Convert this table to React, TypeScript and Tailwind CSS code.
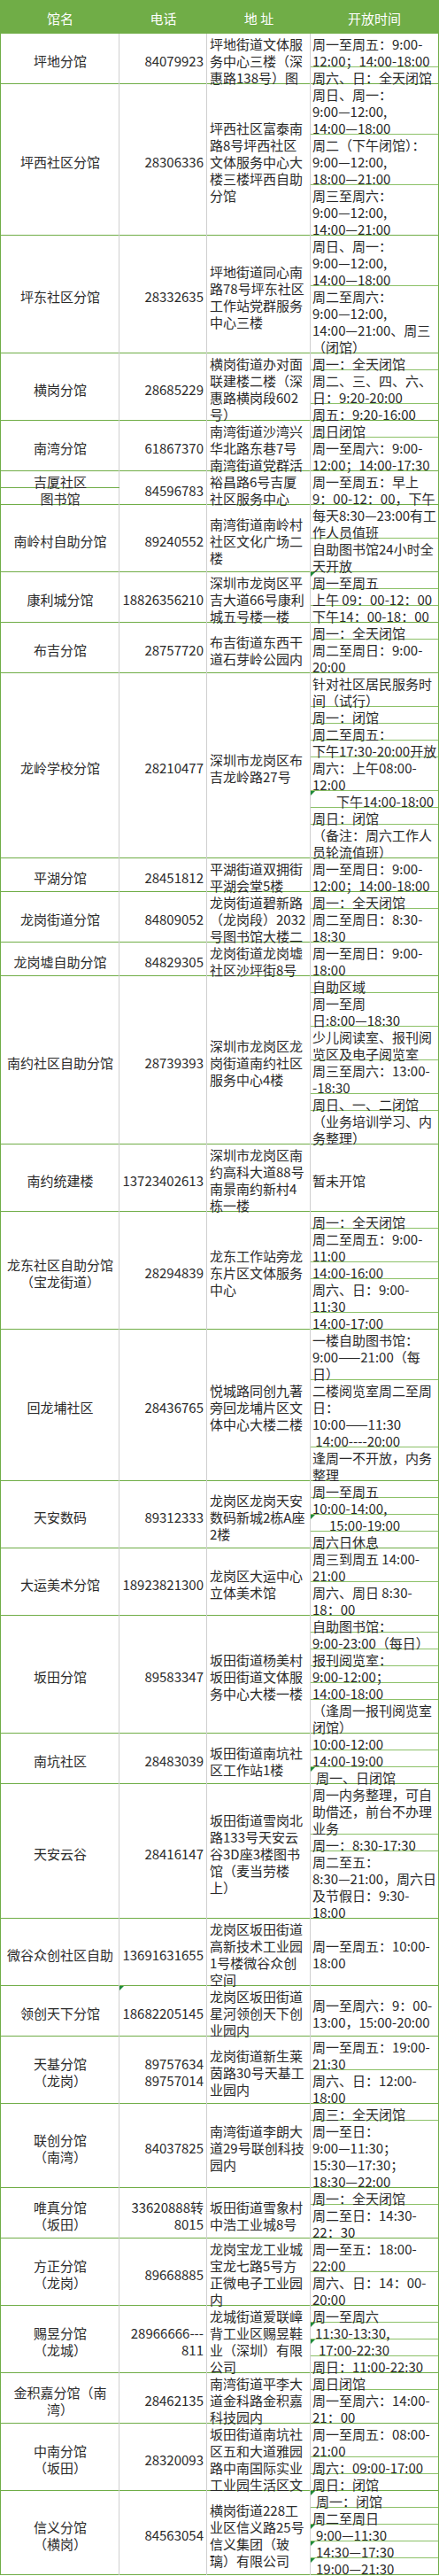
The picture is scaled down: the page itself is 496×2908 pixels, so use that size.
import clsx from "clsx";

type Sub = { span: number; lines: string[]; tri?: boolean; pad?: string };
type Lib = {
  name: string[];
  split?: boolean;
  phone: string[];
  phoneTri?: boolean;
  addr: string[];
  subs: Sub[];
};

// row heights: one excel row = 19px
const H: Record<number, string> = {
  1: "h-[19px]",
  2: "h-[38px]",
  3: "h-[57px]",
  4: "h-[76px]",
  5: "h-[95px]",
  6: "h-[114px]",
  7: "h-[133px]",
  8: "h-[152px]",
  9: "h-[171px]",
  10: "h-[190px]",
  11: "h-[209px]",
};

// grid lines drawn as inset shadows so they take no room from the text
const LINE_B = "shadow-[inset_0_-1px_0_#70ad47]";
const LINE_SUB = "shadow-[inset_0_-1px_0_#8cc168]";
const LINE_R = "shadow-[inset_-1px_0_0_#cfcfcf]";

const LIBS: Lib[] = [
  {
    name: ["坪地分馆"],
    phone: ["84079923"],
    addr: ["坪地街道文体服", "务中心三楼（深", "惠路138号）图"],
    subs: [
      { span: 2, lines: ["周一至周五：9:00-", "12:00；14:00-18:00"] },
      { span: 1, lines: ["周六、日：全天闭馆"] },
    ],
  },
  {
    name: ["坪西社区分馆"],
    phone: ["28306336"],
    addr: ["坪西社区富泰南", "路8号坪西社区", "文体服务中心大", "楼三楼坪西自助", "分馆"],
    subs: [
      { span: 3, lines: ["周日、周一：", "9:00—12:00,", "14:00—18:00"] },
      { span: 3, lines: ["周二（下午闭馆）：", "9:00—12:00,", "18:00—21:00"] },
      { span: 3, lines: ["周三至周六：", "9:00—12:00,", "14:00—21:00"] },
    ],
  },
  {
    name: ["坪东社区分馆"],
    phone: ["28332635"],
    addr: ["坪地街道同心南", "路78号坪东社区", "工作站党群服务", "中心三楼"],
    subs: [
      { span: 3, lines: ["周日、周一：", "9:00—12:00,", "14:00—18:00"] },
      { span: 4, lines: ["周二至周六：", "9:00—12:00,", "14:00—21:00、周三", "（闭馆）"] },
    ],
  },
  {
    name: ["横岗分馆"],
    phone: ["28685229"],
    addr: ["横岗街道办对面", "联建楼二楼（深", "惠路横岗段602", "号）"],
    subs: [
      { span: 1, lines: ["周一：全天闭馆"] },
      { span: 2, lines: ["周二、三、四、六、", "日：9:20-20:00"] },
      { span: 1, lines: ["周五：9:20-16:00"] },
    ],
  },
  {
    name: ["南湾分馆"],
    phone: ["61867370"],
    addr: ["南湾街道沙湾兴", "华北路东巷7号", "南湾街道党群活"],
    subs: [
      { span: 1, lines: ["周日闭馆"] },
      { span: 2, lines: ["周一至周六：9:00-", "12:00；14:00-17:30"] },
    ],
  },
  {
    name: ["吉厦社区", "图书馆"],
    split: true,
    phone: ["84596783"],
    addr: ["裕昌路6号吉厦", "社区服务中心"],
    subs: [{ span: 2, lines: ["周一至周五：早上", "9：00-12：00，下午"] }],
  },
  {
    name: ["南岭村自助分馆"],
    phone: ["89240552"],
    addr: ["南湾街道南岭村", "社区文化广场二", "楼"],
    subs: [
      { span: 2, lines: ["每天8:30—23:00有工", "作人员值班"] },
      { span: 2, lines: ["自助图书馆24小时全", "天开放"] },
    ],
  },
  {
    name: ["康利城分馆"],
    phone: ["18826356210"],
    addr: ["深圳市龙岗区平", "吉大道66号康利", "城五号楼一楼"],
    subs: [
      { span: 1, lines: ["周一至周五"], tri: true },
      { span: 1, lines: ["上午 09：00-12：00"] },
      { span: 1, lines: ["下午14：00-18：00"] },
    ],
  },
  {
    name: ["布吉分馆"],
    phone: ["28757720"],
    addr: ["布吉街道东西干", "道石芽岭公园内"],
    subs: [
      { span: 1, lines: ["周一：全天闭馆"] },
      { span: 2, lines: ["周二至周日：9:00-", "20:00"] },
    ],
  },
  {
    name: ["龙岭学校分馆"],
    phone: ["28210477"],
    addr: ["深圳市龙岗区布", "吉龙岭路27号"],
    subs: [
      { span: 2, lines: ["针对社区居民服务时", "间（试行）"] },
      { span: 1, lines: ["周一：闭馆"] },
      { span: 1, lines: ["周二至周五："] },
      { span: 1, lines: ["下午17:30-20:00开放"] },
      { span: 2, lines: ["周六：上午08:00-", "12:00"] },
      { span: 1, lines: ["下午14:00-18:00"], tri: true, pad: "pl-[29px]" },
      { span: 1, lines: ["周日：闭馆"] },
      { span: 2, lines: ["（备注：周六工作人", "员轮流值班）"] },
    ],
  },
  {
    name: ["平湖分馆"],
    phone: ["28451812"],
    addr: ["平湖街道双拥街", "平湖会堂5楼"],
    subs: [{ span: 2, lines: ["周一至周日：9:00-", "12:00；14:00-18:00"] }],
  },
  {
    name: ["龙岗街道分馆"],
    phone: ["84809052"],
    addr: ["龙岗街道碧新路", "（龙岗段）2032", "号图书馆大楼二"],
    subs: [
      { span: 1, lines: ["周一：全天闭馆"] },
      { span: 2, lines: ["周二至周日：8:30-", "18:30"] },
    ],
  },
  {
    name: ["龙岗墟自助分馆"],
    phone: ["84829305"],
    addr: ["龙岗街道龙岗墟", "社区沙坪街8号"],
    subs: [{ span: 2, lines: ["周一至周日：9:00-", "18:00"] }],
  },
  {
    name: ["南约社区自助分馆"],
    phone: ["28739393"],
    addr: ["深圳市龙岗区龙", "岗街道南约社区", "服务中心4楼"],
    subs: [
      { span: 1, lines: ["自助区域"] },
      { span: 2, lines: ["周一至周", "日:8:00—18:30"] },
      { span: 2, lines: ["少儿阅读室、报刊阅", "览区及电子阅览室"] },
      { span: 2, lines: ["周三至周六：13:00-", "-18:30"] },
      { span: 1, lines: ["周日、一、二闭馆"] },
      { span: 2, lines: ["（业务培训学习、内", "务整理）"] },
    ],
  },
  {
    name: ["南约统建楼"],
    phone: ["13723402613"],
    addr: ["深圳市龙岗区南", "约高科大道88号", "南景南约新村4", "栋一楼"],
    subs: [{ span: 4, lines: ["暂未开馆"] }],
  },
  {
    name: ["龙东社区自助分馆", "（宝龙街道）"],
    phone: ["28294839"],
    addr: ["龙东工作站旁龙", "东片区文体服务", "中心"],
    subs: [
      { span: 1, lines: ["周一：全天闭馆"] },
      { span: 2, lines: ["周二至周五：9:00-", "11:00"] },
      { span: 1, lines: ["14:00-16:00"] },
      { span: 2, lines: ["周六、日：9:00-", "11:30"] },
      { span: 1, lines: ["14:00-17:00"] },
    ],
  },
  {
    name: ["回龙埔社区"],
    phone: ["28436765"],
    addr: ["悦城路同创九著", "旁回龙埔片区文", "体中心大楼二楼"],
    subs: [
      { span: 3, lines: ["一楼自助图书馆：", "9:00——21:00（每", "日）"] },
      { span: 4, lines: ["二楼阅览室周二至周", "日：", "10:00——11:30", " 14:00----20:00"] },
      { span: 2, lines: ["逢周一不开放，内务", "整理"] },
    ],
  },
  {
    name: ["天安数码"],
    phone: ["89312333"],
    addr: ["龙岗区龙岗天安", "数码新城2栋A座", "2楼"],
    subs: [
      { span: 1, lines: ["周一至周五"] },
      { span: 1, lines: ["10:00-14:00,"] },
      { span: 1, lines: ["15:00-19:00"], tri: true, pad: "pl-[21px]" },
      { span: 1, lines: ["周六日休息"] },
    ],
  },
  {
    name: ["大运美术分馆"],
    phone: ["18923821300"],
    addr: ["龙岗区大运中心", "立体美术馆"],
    subs: [
      { span: 2, lines: ["周三到周五 14:00-", "21:00"] },
      { span: 2, lines: ["周六、周日 8:30-", "18：00"] },
    ],
  },
  {
    name: ["坂田分馆"],
    phone: ["89583347"],
    addr: ["坂田街道杨美村", "坂田街道文体服", "务中心大楼一楼"],
    subs: [
      { span: 1, lines: ["自助图书馆："] },
      { span: 1, lines: ["9:00-23:00（每日）"] },
      { span: 1, lines: ["报刊阅览室："] },
      { span: 1, lines: ["9:00-12:00；"] },
      { span: 1, lines: ["14:00-18:00"] },
      { span: 2, lines: ["（逢周一报刊阅览室", "闭馆）"] },
    ],
  },
  {
    name: ["南坑社区"],
    phone: ["28483039"],
    addr: ["坂田街道南坑社", "区工作站1楼"],
    subs: [
      { span: 1, lines: ["10:00-12:00"] },
      { span: 1, lines: ["14:00-19:00"] },
      { span: 1, lines: ["周一、日闭馆"], tri: true, pad: "pl-[6px]" },
    ],
  },
  {
    name: ["天安云谷"],
    phone: ["28416147"],
    addr: ["坂田街道雪岗北", "路133号天安云", "谷3D座3楼图书", "馆（麦当劳楼", "上）"],
    subs: [
      { span: 3, lines: ["周一内务整理，可自", "助借还，前台不办理", "业务"] },
      { span: 1, lines: ["周一：8:30-17:30"] },
      { span: 4, lines: ["周二至五：", "8:30—21:00，周六日", "及节假日：9:30-", "18:00"] },
    ],
  },
  {
    name: ["微谷众创社区自助"],
    phone: ["13691631655"],
    addr: ["龙岗区坂田街道", "高新技术工业园", "1号楼微谷众创", "空间"],
    subs: [{ span: 4, lines: ["周一至周五：10:00-", "18:00"] }],
  },
  {
    name: ["领创天下分馆"],
    phone: ["18682205145"],
    phoneTri: true,
    addr: ["龙岗区坂田街道", "星河领创天下创", "业园内"],
    subs: [{ span: 3, lines: ["周一至周六：9：00-", "13:00，15:00-20:00"] }],
  },
  {
    name: ["天基分馆", "（龙岗）"],
    phone: ["89757634", "89757014"],
    addr: ["龙岗街道新生莱", "茵路30号天基工", "业园内"],
    subs: [
      { span: 2, lines: ["周一至周五：19:00-", "21:30"] },
      { span: 2, lines: ["周六、日：12:00-", "18:00"] },
    ],
  },
  {
    name: ["联创分馆", "（南湾）"],
    phone: ["84037825"],
    addr: ["南湾街道李朗大", "道29号联创科技", "园内"],
    subs: [
      { span: 1, lines: ["周三：全天闭馆"] },
      { span: 4, lines: ["周一至日：", "9:00—11:30；", "15:30—17:30；", "18:30—22:00"] },
    ],
  },
  {
    name: ["唯真分馆", "（坂田）"],
    phone: ["33620888转", "8015"],
    addr: ["坂田街道雪象村", "中浩工业城8号"],
    subs: [
      { span: 1, lines: ["周一：全天闭馆"] },
      { span: 2, lines: ["周二至日：14:30-", "22：30"] },
    ],
  },
  {
    name: ["方正分馆", "（龙岗）"],
    phone: ["89668885"],
    addr: ["龙岗宝龙工业城", "宝龙七路5号方", "正微电子工业园", "内"],
    subs: [
      { span: 2, lines: ["周一至五：18:00-", "22:00"] },
      { span: 2, lines: ["周六、日：14：00-", "20:00"] },
    ],
  },
  {
    name: ["赐昱分馆", "（龙城）"],
    phone: ["28966666---", "811"],
    addr: ["龙城街道爱联嶂", "背工业区赐昱鞋", "业（深圳）有限", "公司"],
    subs: [
      { span: 1, lines: ["周一至周六"] },
      { span: 1, lines: ["11:30-13:30,"], tri: true, pad: "pl-[5px]" },
      { span: 1, lines: ["17:00-22:30"], tri: true, pad: "pl-[9px]" },
      { span: 1, lines: ["周日：11:00-22:30"] },
    ],
  },
  {
    name: ["金积嘉分馆（南", "湾）"],
    phone: ["28462135"],
    addr: ["南湾街道平李大", "道金科路金积嘉", "科技园内"],
    subs: [
      { span: 1, lines: ["周日闭馆"] },
      { span: 2, lines: ["周一至周六：14:00-", "21：00"] },
    ],
  },
  {
    name: ["中南分馆", "（坂田）"],
    phone: ["28320093"],
    addr: ["坂田街道南坑社", "区五和大道雅园", "路中南国际实业", "工业园生活区文"],
    subs: [
      { span: 2, lines: ["周一至周五：08:00-", "21:00"] },
      { span: 1, lines: ["周六：09:00-17:00"] },
      { span: 1, lines: ["周日：闭馆"] },
    ],
  },
  {
    name: ["信义分馆", "（横岗）"],
    phone: ["84563054"],
    addr: ["横岗街道228工", "业区信义路25号", "信义集团（玻", "璃）有限公司"],
    subs: [
      { span: 1, lines: ["周一：闭馆"], tri: true, pad: "pl-[6px]" },
      { span: 1, lines: ["周二至周日"] },
      { span: 1, lines: ["9:00—11:30"], tri: true, pad: "pl-[6px]" },
      { span: 1, lines: ["14:30—17:30"], tri: true, pad: "pl-[6px]" },
      { span: 1, lines: ["19:00—21:30"], tri: true, pad: "pl-[6px]" },
    ],
  },
];

function Tri() {
  return (
    <span className="absolute left-0 top-0 h-0 w-0 border-t-[5px] border-r-[5px] border-t-[#1f8a3b] border-r-transparent" />
  );
}

function Lines({ lines }: { lines: string[] }) {
  return (
    <>
      {lines.map((l, i) => (
        <div key={i} className="translate-y-[2px] whitespace-pre">
          {l}
        </div>
      ))}
    </>
  );
}

function Row({ lib }: { lib: Lib }) {
  const units = lib.subs.reduce((s, x) => s + x.span, 0);

  return (
    <div className={clsx("flex", LINE_B, H[units])}>
      {/* 馆名 */}
      {lib.split ? (
        <div className={clsx("flex w-[134px] shrink-0 flex-col", LINE_R)}>
          <div className={clsx("flex h-[19px] items-center justify-center", LINE_B)}>
            <Lines lines={[lib.name[0]]} />
          </div>
          <div className="flex flex-1 items-center justify-center">
            <Lines lines={[lib.name[1]]} />
          </div>
        </div>
      ) : (
        <div className={clsx("flex w-[134px] shrink-0 flex-col items-center justify-center text-center", LINE_R)}>
          <Lines lines={lib.name} />
        </div>
      )}

      {/* 电话 */}
      <div className={clsx("relative flex w-[99px] shrink-0 flex-col items-end justify-center pr-[4px]", LINE_R)}>
        {lib.phoneTri && <Tri />}
        <Lines lines={lib.phone} />
      </div>

      {/* 地址 */}
      <div className={clsx("flex w-[117px] shrink-0 flex-col justify-center pl-[3px]", LINE_R)}>
        <Lines lines={lib.addr} />
      </div>

      {/* 开放时间 */}
      <div className="flex min-w-0 flex-1 flex-col">
        {lib.subs.map((s, i) => {
          const last = i === lib.subs.length - 1;
          return (
            <div
              key={i}
              className={clsx(
                "relative flex flex-col justify-center",
                s.pad ?? "pl-[2px]",
                last ? "flex-1" : clsx(H[s.span], "shrink-0", LINE_SUB)
              )}
            >
              {s.tri && <Tri />}
              <Lines lines={s.lines} />
            </div>
          );
        })}
      </div>
    </div>
  );
}

export default function App() {
  return (
    <div className="w-[496px] border-x border-[#70ad47] bg-white font-['Noto_Sans_CJK_SC',sans-serif] text-[15px] leading-[19px] text-[#2a2a2a]">
      {/* 表头 */}
      <div className="flex h-[38px] bg-[#70ad47] pt-[2px] text-white">
        <div className="flex w-[134px] shrink-0 items-center justify-center">馆名</div>
        <div className="flex w-[99px] shrink-0 items-center justify-center">电话</div>
        <div className="flex w-[117px] shrink-0 items-center justify-center whitespace-pre">地 址</div>
        <div className="flex flex-1 items-center justify-center">开放时间</div>
      </div>

      {LIBS.map((lib) => (
        <Row key={lib.name.join("")} lib={lib} />
      ))}
    </div>
  );
}
